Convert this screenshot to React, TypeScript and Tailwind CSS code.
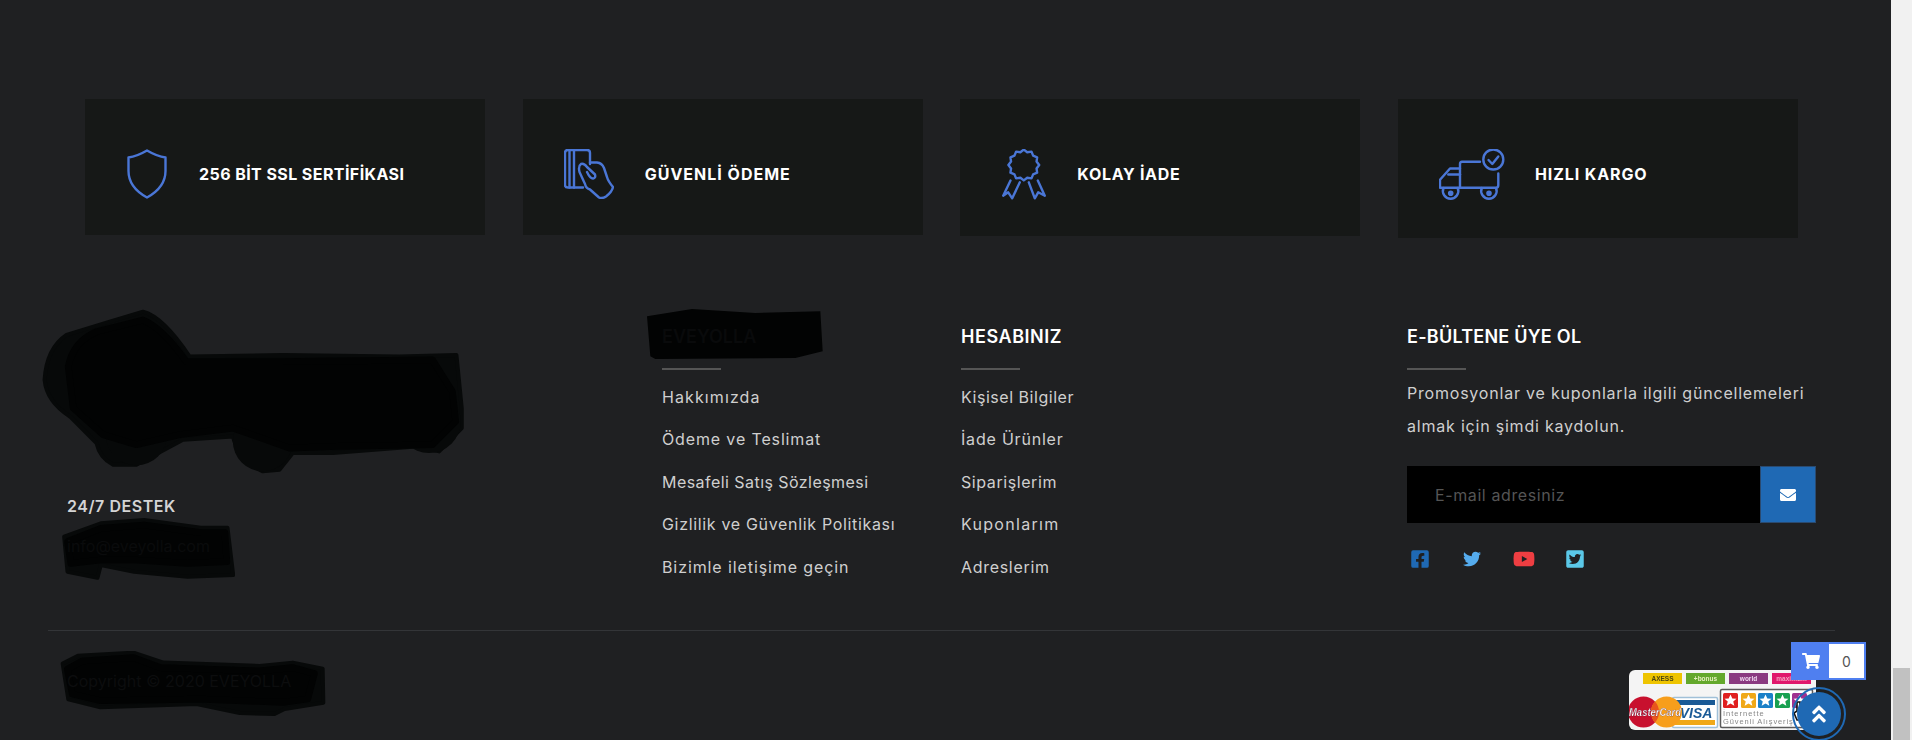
import React from "react";
import { FaFacebookSquare, FaTwitter, FaYoutube, FaTwitterSquare, FaEnvelope, FaShoppingCart, FaAngleDoubleUp } from "react-icons/fa";

const ICON = "#4a76d6";

function ShieldIcon() {
  return (
    <svg width="40" height="50" viewBox="0 0 40 50" fill="none" stroke={ICON} strokeWidth="2.4" strokeLinejoin="round">
      <path d="M20 1.5C26 5 31 7.5 38.5 8.5V22C38.5 34 30 43 20 48.5C10 43 1.5 34 1.5 22V8.5C9 7.5 14 5 20 1.5Z" />
    </svg>
  );
}

function CardHandIcon() {
  return (
    <svg width="50" height="50" viewBox="14 14 50 50" fill="none" stroke={ICON} strokeWidth="2.4" strokeLinecap="round" strokeLinejoin="round">
      <path d="M33 52.5H18Q15 52.5 15 50V18Q15 15 18 15H37Q40 15 40 18V29" />
      <path d="M19.5 15V52.5M24 15V52.5" />
      <path d="M40 27.5H47Q52 28 54 33L57 42Q58 46 63 52Q62 57 56 61.5Q52 64 49 62.5L40 54.5Q36 53.5 35 49L29.5 37Q28 31 31 29Q34 28 37 32L45 39.5Q46 43 43 43.5Q40 43.5 37 37" />
    </svg>
  );
}

function BadgeIcon() {
  const pts: string[] = [];
  for (let i = 0; i < 24; i++) {
    const r = i % 2 === 0 ? 15.4 : 13.2;
    const a = (i * Math.PI) / 12 - Math.PI / 2;
    pts.push(`${(38.3 + r * Math.cos(a)).toFixed(2)},${(30 + r * Math.sin(a)).toFixed(2)}`);
  }
  return (
    <svg width="44" height="51" viewBox="16.5 14 44 51" fill="none" stroke={ICON} strokeWidth="2.4" strokeLinecap="round" strokeLinejoin="round">
      <polygon points={pts.join(" ")} />
      <path d="M25 45.5L17.7 60.7L22.7 57.3L26.7 63.3L34.3 47.3" />
      <path d="M43.3 47.3L49.3 63.3L52.7 57.3L59.3 60.7L52.3 45.5" />
    </svg>
  );
}

function TruckIcon() {
  return (
    <svg width="66" height="53" viewBox="14 14 66 53" fill="none" stroke={ICON} strokeWidth="2.4" strokeLinecap="round" strokeLinejoin="round">
      <circle cx="68.3" cy="24.5" r="10" />
      <path d="M63.5 25L67.3 29L73.3 21.5" />
      <path d="M55 26.7H37Q35 26.7 35 29V52.7" />
      <path d="M73.3 38.5V50Q73.3 52.7 71 52.7H15V44.7L25 33.5H35" />
      <path d="M23.3 39.5H35" />
      <path d="M18.5 53A7.7 7.7 0 1 0 32.7 53" />
      <path d="M56.8 53A7.7 7.7 0 1 0 71 53" />
      <circle cx="25.7" cy="58.3" r="1.6" fill={ICON} />
      <circle cx="64" cy="58.3" r="1.6" fill={ICON} />
    </svg>
  );
}

function Scribble({ className, viewBox, w, h, outer, inner, extra }: { className: string; viewBox: string; w: number; h: number; outer: string; inner: string; extra?: React.ReactNode }) {
  return (
    <svg className={className} width={w} height={h} viewBox={viewBox} strokeLinejoin="round">
      <path d={outer} fill="#070909" stroke="#070909" strokeWidth="12" />
      {extra}
      <path d={inner} fill="#020303" stroke="#020303" strokeWidth="20" />
    </svg>
  );
}

function PaymentBadge() {
  const chips = [
    { x: 14, c: "#eec400", t: "AXESS", f: "#4a4410" },
    { x: 57, c: "#64a82c", t: "+bonus", f: "#e8f0c0" },
    { x: 100, c: "#8a3a80", t: "world", f: "#f0d8f0" },
    { x: 143, c: "#e0186c", t: "maximum", f: "#f4a0c0" },
  ];
  const stars = [
    { x: 94, c: "#e02020" },
    { x: 112, c: "#f0a818" },
    { x: 129, c: "#1a80c8" },
    { x: 146, c: "#18a050" },
    { x: 163, c: "#a03090" },
  ];
  return (
    <svg width="187" height="60" viewBox="0 0 187 60" className="mt-px shrink-0 blur-[0.3px]">
      <rect width="187" height="60" rx="6" fill="#f4f4f4" />
      {chips.map((c) => (
        <g key={c.x}>
          <rect x={c.x} y="3" width="39" height="11" fill={c.c} />
          <text x={c.x + 19.5} y="11" textAnchor="middle" fontSize="6.5" fontWeight="700" fontFamily="Liberation Sans" fill={c.f}>{c.t}</text>
        </g>
      ))}
      <rect x="43.5" y="27.5" width="45" height="30" rx="1.5" fill="#fff" stroke="#a0c0d8" strokeWidth="1.5" />
      <rect x="46" y="30" width="40" height="5" fill="#1a5a96" />
      <rect x="46" y="50" width="40" height="5" fill="#f0a818" />
      <text x="67" y="47.5" textAnchor="middle" fontSize="14" fontWeight="700" fontStyle="italic" fontFamily="Liberation Sans" fill="#1a5a96">VISA</text>
      <circle cx="14.5" cy="42" r="15.5" fill="#c8102e" />
      <circle cx="37.5" cy="42" r="15.5" fill="#f79e1b" />
      <path d="M26 31.6A15.5 15.5 0 0 1 26 52.4A15.5 15.5 0 0 1 26 31.6Z" fill="#e8541c" />
      <text x="26" y="46" textAnchor="middle" fontSize="11" fontWeight="700" fontStyle="italic" fontFamily="Liberation Sans" fill="#fff" stroke="#4a2040" strokeWidth="0.25" textLength="52" lengthAdjust="spacingAndGlyphs">MasterCard</text>
      <rect x="91.5" y="19.5" width="92" height="38" rx="1.5" fill="#fff" stroke="#5a5a5a" strokeWidth="1.5" />
      {stars.map((s) => (
        <g key={s.x}>
          <rect x={s.x} y="23" width="15" height="15" rx="1.5" fill={s.c} />
          <path transform={`translate(${s.x + 7.5} 30.5) scale(1.2)`} d="M0-5L1.5-1.6L5-1.5L2.3 .8L3.2 4.3L0 2.4L-3.2 4.3L-2.3 .8L-5-1.5L-1.5-1.6Z" fill="#fff" />
        </g>
      ))}
      <text x="94" y="46" fontSize="7.5" fontFamily="Liberation Sans" letterSpacing="1" fill="#888888">İnternette</text>
      <text x="94" y="54" fontSize="7.5" fontFamily="Liberation Sans" letterSpacing="0.9" fill="#888888">Güvenli Alışveriş</text>
    </svg>
  );
}

const cards = [
  { h: "h-[136px]", pl: "pl-[42px]", gap: "gap-[32px]", icon: <ShieldIcon />, t: "256 BİT SSL SERTİFİKASI", tr: "tracking-[0.42px]" },
  { h: "h-[136px]", pl: "pl-[41px]", gap: "gap-[31px]", icon: <CardHandIcon />, t: "GÜVENLİ ÖDEME", tr: "tracking-[1px]" },
  { h: "h-[137px]", pl: "pl-[42px]", gap: "gap-[31px]", icon: <BadgeIcon />, t: "KOLAY İADE", tr: "tracking-[0.7px]" },
  { h: "h-[139px]", pl: "pl-[41px]", gap: "gap-[30px]", icon: <TruckIcon />, t: "HIZLI KARGO", tr: "tracking-[0.9px]" },
];

const col2 = [
  { t: "Hakkımızda", tr: "tracking-[1.1px]" },
  { t: "Ödeme ve Teslimat", tr: "tracking-[0.86px]" },
  { t: "Mesafeli Satış Sözleşmesi", tr: "tracking-[0.45px]" },
  { t: "Gizlilik ve Güvenlik Politikası", tr: "tracking-[0.67px]" },
  { t: "Bizimle iletişime geçin", tr: "tracking-[0.9px]" },
];
const col3 = [
  { t: "Kişisel Bilgiler", tr: "tracking-[0.53px]" },
  { t: "İade Ürünler", tr: "tracking-[0.8px]" },
  { t: "Siparişlerim", tr: "tracking-[0.58px]" },
  { t: "Kuponlarım", tr: "tracking-[1.3px]" },
  { t: "Adreslerim", tr: "tracking-[0.7px]" },
];

function LinkList({ items }: { items: { t: string; tr: string }[] }) {
  return (
    <ul className="mt-[15px] flex flex-col gap-[18.4px] text-[16px] leading-[24px] text-[#cfcfcf]">
      {items.map((i) => (
        <li key={i.t} className={i.tr}>{i.t}</li>
      ))}
    </ul>
  );
}

export default function App() {
  return (
    <div className="flex h-[740px] w-full overflow-hidden font-[Inter,sans-serif] text-[#cfcfcf]">
      <main className="relative min-w-0 flex-1 bg-[#1f2022] pt-[99px]">
        <section className="flex items-start gap-[37.67px] pl-[85px]">
          {cards.map((c) => (
            <div key={c.t} className={`flex w-[400px] ${c.h} ${c.pl} ${c.gap} items-start bg-[#161817] pt-[50px]`}>
              <div className="shrink-0">{c.icon}</div>
              <span className={`mt-[13px] text-[16px] leading-[24px] font-bold text-white ${c.tr}`}>{c.t}</span>
            </div>
          ))}
        </section>

        <section className="mt-[87px] flex h-[305px] pl-[67px]">
          <div className="relative w-[595px]">
            <Scribble
              className="absolute top-[-17px] left-[-27px]"
              viewBox="112 49 1280 502"
              w={427}
              h={167}
              outer="M124 265Q130 170 190 130L320 90L420 60Q480 75 560 195L840 190L1190 195L1362 190L1378 350V410L1310 480L1240 465L990 485L870 485L830 535L780 540Q710 510 690 435L540 445L400 520L330 520Q290 500 280 455L200 375Q130 330 124 265Z"
              inner="M195 225Q210 150 280 120L420 85Q480 110 550 210L840 210L1290 205L1350 300L1360 390L1290 460L1000 465L860 470L690 410L530 430L400 460L300 430L210 350Z"
              extra={
                <g fill="#070909">
                  <circle cx="780" cy="450" r="90" />
                  <circle cx="1280" cy="390" r="95" />
                  <circle cx="400" cy="430" r="92" />
                </g>
              }
            />
            <div className="relative mt-[169px] text-[16px] leading-[24px] font-semibold tracking-[0.55px] text-[#d4d4d4]">24/7 DESTEK</div>
            <Scribble
              className="absolute top-[193px] left-[-5px]"
              viewBox="184 684 518 186"
              w={173}
              h={62}
              outer="M190 740L300 700L430 690L600 713L680 713L697 855L560 860L400 845L300 825L290 863L200 845Z"
              inner="M200 755L300 715L430 705L600 728L672 728L678 815L560 820L400 810L300 810L210 820Z"
            />
            <div className="relative mt-[16px] text-[16px] leading-[24px] text-[#0a0b0c]">info@eveyolla.com</div>
          </div>

          <div className="relative w-[299px]">
            <svg className="absolute top-[-16px] left-[-15px]" width="176" height="50" viewBox="55 28 528 150">
              <path d="M55 50L190 28L380 40L575 35L582 155L500 175L80 178L65 170Z" fill="#020303" />
            </svg>
            <h3 className="relative text-[18px] leading-[24px] font-semibold text-[#090a0b]">EVEYOLLA</h3>
            <div className="mt-[19px] h-[2px] w-[59px] bg-[#555555]" />
            <LinkList items={col2} />
          </div>

          <div className="w-[446px]">
            <h3 className="text-[18px] leading-[24px] font-semibold tracking-[0.55px] text-white">HESABINIZ</h3>
            <div className="mt-[19px] h-[2px] w-[59px] bg-[#555555]" />
            <LinkList items={col3} />
          </div>

          <div className="w-[409px]">
            <h3 className="text-[18px] leading-[24px] font-semibold tracking-[0.25px] text-white">E-BÜLTENE ÜYE OL</h3>
            <div className="mt-[19px] h-[2px] w-[59px] bg-[#555555]" />
            <p className="mt-[7px] text-[16px] leading-[32.5px] tracking-[0.79px] text-[#cfcfcf]">
              Promosyonlar ve kuponlarla ilgili güncellemeleri
              <br />
              almak için şimdi kaydolun.
            </p>
            <div className="mt-[24px] flex h-[57px] w-[409px]">
              <div className="flex w-[353px] items-center bg-black pl-[28px] text-[16px] tracking-[0.6px] text-[#555555]">E-mail adresiniz</div>
              <div className="flex w-[56px] items-center justify-center border border-[#2a4a70] bg-[#1f69b4]">
                <FaEnvelope className="text-[16px] text-white" />
              </div>
            </div>
            <div className="mt-[26px] flex items-center pl-[4px]">
              <FaFacebookSquare className="h-[20px] w-[18px] text-[#1f69b4]" />
              <FaTwitter className="ml-[34px] h-[18px] w-[18px] text-[#55acee]" />
              <FaYoutube className="ml-[32px] h-[20px] w-[22px] text-[#ee3e42]" />
              <FaTwitterSquare className="ml-[31px] h-[20px] w-[18px] text-[#5bc8e8]" />
            </div>
          </div>
        </section>

        <div className="ml-[48px] h-px w-[1787px] bg-[#333538]" />

        <section className="flex items-start justify-between pt-[38px] pr-[75px] pl-[67px]">
          <div className="relative">
            <Scribble
              className="absolute top-[-18px] left-[-7px]"
              viewBox="180 1080 798 196"
              w={266}
              h={65}
              outer="M186 1118L232 1094L400 1085L490 1115L780 1125L880 1115L970 1133L972 1236L855 1255L825 1270L720 1267L590 1240L300 1250L203 1226Z"
              inner="M200 1135L245 1110L400 1100L480 1130L780 1140L880 1130L945 1148L925 1225L850 1235L600 1225L300 1230L215 1210Z"
            />
            <span className="relative text-[16px] leading-[24px] text-[#0c0d0e]">Copyright © 2020 EVEYOLLA</span>
          </div>
          <PaymentBadge />
        </section>

        <div className="absolute top-[642px] left-[1791px] flex h-[38px] w-[75px] border-2 border-[#4f7ff0] bg-white">
          <div className="flex w-[36px] items-center justify-center bg-[#4f7ff0]">
            <FaShoppingCart className="text-[18px] text-white" />
          </div>
          <div className="flex flex-1 items-center justify-center text-[14px] text-[#555555]">0</div>
        </div>

        <svg className="absolute top-[700px] left-[1793px]" width="12" height="22" viewBox="0 0 12 22">
          <path d="M4 2V11L1 13L4 20H11V10L7 9V2Z" fill="#fff" stroke="#111" strokeWidth="1.6" />
        </svg>
        <div className="absolute top-[687px] left-[1792px] flex h-[54px] w-[54px] items-center justify-center rounded-full border-2 border-[#1f69b4]">
          <div className="flex h-[44px] w-[44px] items-center justify-center rounded-full bg-[#1f69b4]">
            <FaAngleDoubleUp className="text-[22px] text-white" />
          </div>
        </div>
      </main>
      <aside className="w-[21px] shrink-0 bg-[#f1f1f1] pt-[668px]">
        <div className="mx-[2px] h-[72px] bg-[#c1c1c1]" />
      </aside>
    </div>
  );
}
